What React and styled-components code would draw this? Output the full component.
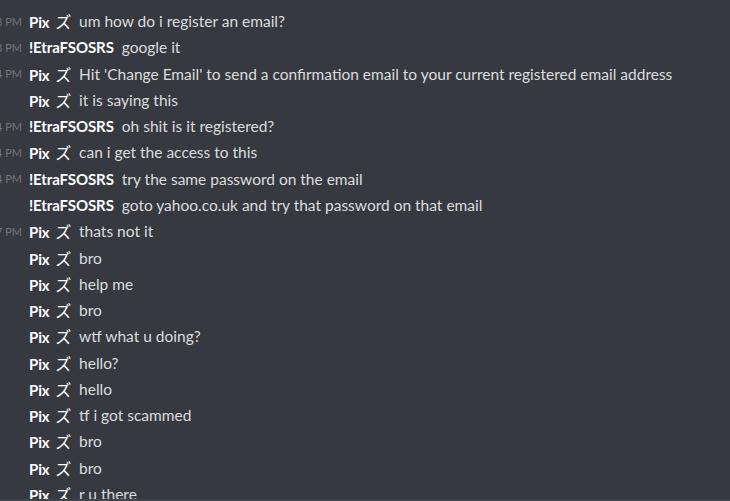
import React from "react";
import styled, { createGlobalStyle } from "styled-components";

const Global = createGlobalStyle`
  html, body { margin: 0; padding: 0; background: #36393f; }
  body { overflow: hidden; }
`;

const Page = styled.div`
  width: 730px;
  height: 501px;
  background: #36393f;
  display: flex;
  flex-direction: column;
  overflow: hidden;
  font-family: Lato, "Noto Sans", "Noto Sans CJK JP", sans-serif;
`;

const List = styled.div`
  flex: 1;
  padding-top: 8px;
  overflow: hidden;
`;

const Row = styled.div`
  height: 26.28px;
  display: flex;
  align-items: center;
  white-space: nowrap;
`;

const Stamp = styled.div`
  width: 22px;
  flex: none;
  display: flex;
  justify-content: flex-end;
  overflow: hidden;
  color: #72767d;
  font-size: 11px;
  margin-right: 7px;
  span { flex: none; }
`;

const Name = styled.span`
  color: #ffffff;
  font-weight: 700;
  font-size: 15px;
  letter-spacing: -0.1px;
  margin-right: 8px;
`;

const Kana = styled.span`
  font-weight: 400;
  font-size: 16px;
  margin-left: 2px;
`;

const Text = styled.span`
  color: #dcddde;
  font-size: 15.5px;
`;

const Composer = styled.div`
  height: 2px;
  background: #40444b;
  flex: none;
`;

const PIX = "pix";
const ETRA = "etra";

const messages = [
  ["10:43 PM", PIX, "um how do i register an email?"],
  ["10:43 PM", ETRA, "google it"],
  ["10:44 PM", PIX, "Hit 'Change Email' to send a confirmation email to your current registered email address"],
  ["", PIX, "it is saying this"],
  ["10:44 PM", ETRA, "oh shit is it registered?"],
  ["10:44 PM", PIX, "can i get the access to this"],
  ["10:44 PM", ETRA, "try the same password on the email"],
  ["", ETRA, "goto yahoo.co.uk and try that password on that email"],
  ["10:47 PM", PIX, "thats not it"],
  ["", PIX, "bro"],
  ["", PIX, "help me"],
  ["", PIX, "bro"],
  ["", PIX, "wtf what u doing?"],
  ["", PIX, "hello?"],
  ["", PIX, "hello"],
  ["", PIX, "tf i got scammed"],
  ["", PIX, "bro"],
  ["", PIX, "bro"],
  ["", PIX, "r u there"],
];

export default function App() {
  return (
    <Page>
      <Global />
      <List>
        {messages.map(([t, n, m], i) => (
          <Row key={i}>
            <Stamp>{t && <span>{t}</span>}</Stamp>
            <Name>
              {n === PIX ? (
                <>
                  Pix <Kana>ズ</Kana>
                </>
              ) : (
                "!EtraFSOSRS"
              )}
            </Name>
            <Text>{m}</Text>
          </Row>
        ))}
      </List>
      <Composer />
    </Page>
  );
}
